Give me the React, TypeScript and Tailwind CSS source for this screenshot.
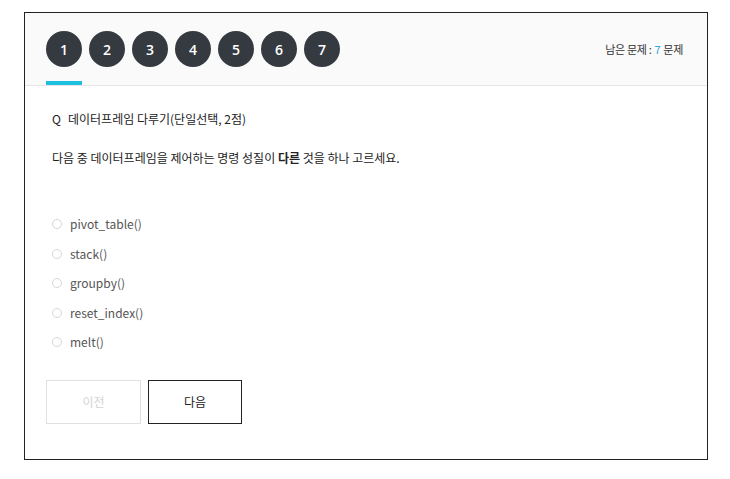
import React from "react";

const font = { fontFamily: '"Noto Sans CJK KR", "Noto Sans", sans-serif' };

export default function App() {
  const tabs = [1, 2, 3, 4, 5, 6, 7];
  const options = ["pivot_table()", "stack()", "groupby()", "reset_index()", "melt()"];
  return (
    <div className="bg-white w-[730px] h-[479px] pt-[12px] pl-[24px]" style={font}>
      <div className="w-[684px] h-[448px] border border-[#222] bg-white flex flex-col">
        <div className="bg-[#fafafa] border-b border-[#e6e6e6] flex justify-between pl-[21px] pr-[24px] pt-[18px]">
          <div className="flex gap-[7px]">
            {tabs.map((t) => (
              <div key={t} className="flex flex-col items-center">
                <div className="w-[36px] h-[36px] rounded-full bg-[#343a40] text-white flex items-center justify-center text-[14px] font-semibold" style={{ fontFamily: '"Open Sans", "Noto Sans", sans-serif' }}>
                  {t}
                </div>
                <div className={`mt-[14px] h-[4px] w-[36px] ${t === 1 ? "bg-[#1ec0e0]" : "bg-transparent"}`} />
              </div>
            ))}
          </div>
          <div className="h-[36px] flex items-center text-[11px] text-[#333] tracking-[-0.3px]">
            남은 문제 : <span className="text-[#2aa8e0] mx-[3px]">7</span> 문제
          </div>
        </div>
        <div className="px-[27px] pt-[24px] flex flex-col">
          <div className="text-[12px] text-[#222] leading-[18px] flex">
            <span className="w-[16px]">Q</span>
            <span>데이터프레임 다루기(단일선택, 2점)</span>
          </div>
          <div className="mt-[21px] text-[12px] text-[#222] leading-[18px]">
            다음 중 데이터프레임을 제어하는 명령 성질이 <b className="font-bold">다른</b> 것을 하나 고르세요.
          </div>
          <div className="mt-[48px] flex flex-col gap-[11.5px]">
            {options.map((o) => (
              <div key={o} className="flex items-center h-[18px]">
                <span className="w-[10px] h-[10px] rounded-full border border-[#d6d6d6] mr-[8px]" />
                <span className="text-[12px] text-[#555]">{o}</span>
              </div>
            ))}
          </div>
        </div>
        <div className="flex gap-[7px] px-[21px] mt-[29px]">
          <div className="w-[95px] h-[44px] border border-[#e0e0e0] flex items-center justify-center text-[12px] text-[#d4d4d4]">
            이전
          </div>
          <div className="w-[94px] h-[44px] border border-[#222] flex items-center justify-center text-[12px] text-[#222]">
            다음
          </div>
        </div>
      </div>
    </div>
  );
}
